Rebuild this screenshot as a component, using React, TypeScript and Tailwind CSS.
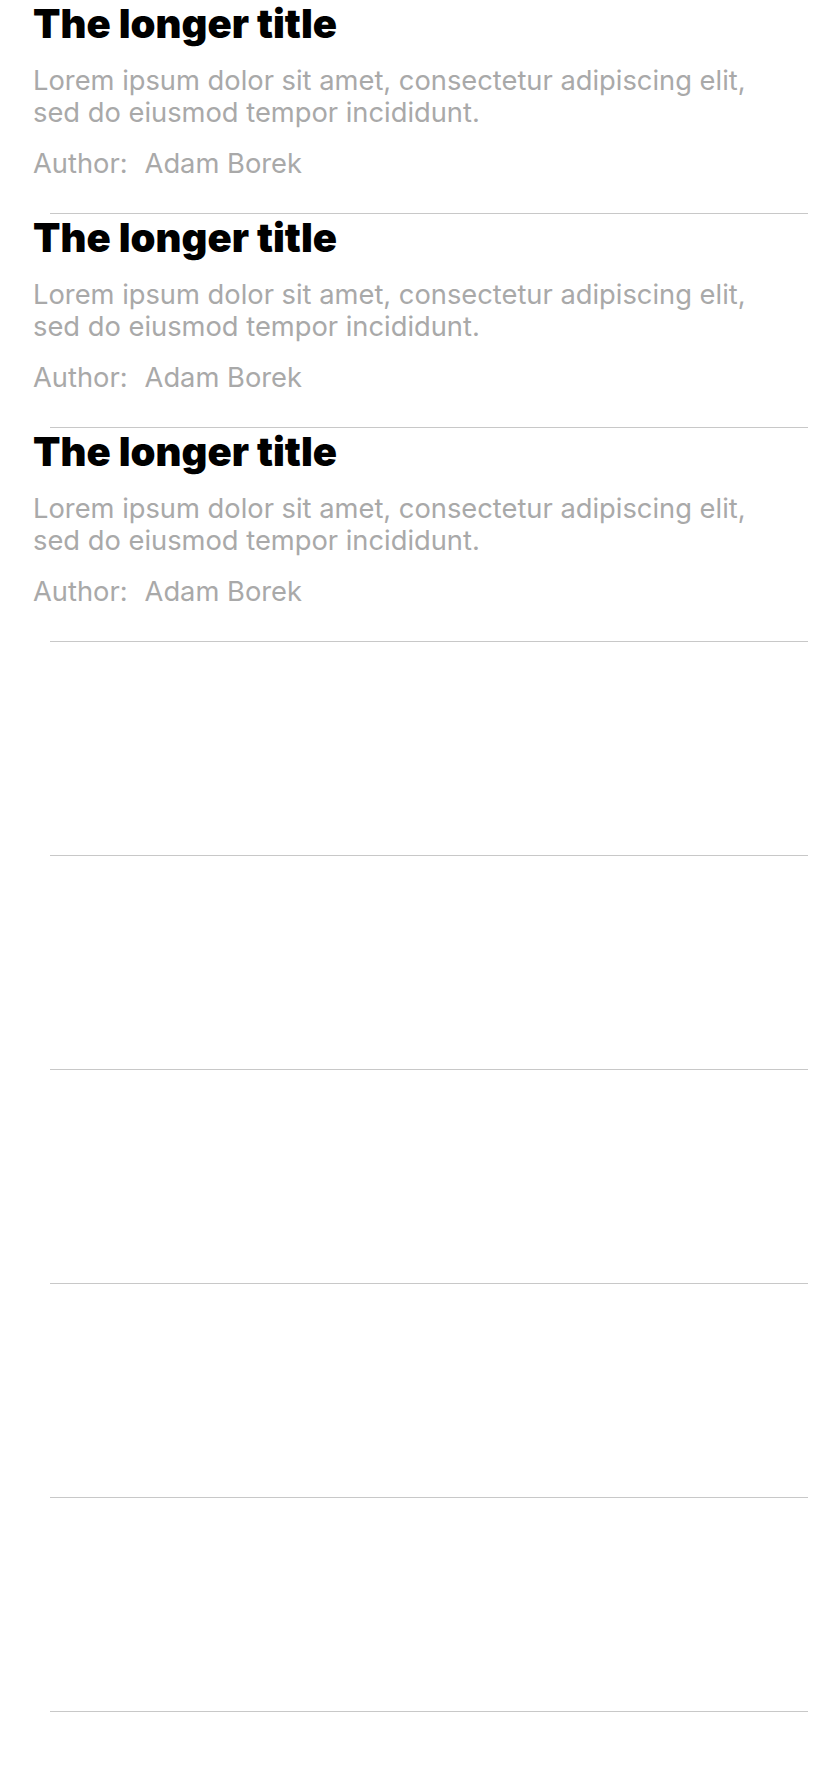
import React from "react";

const rows = [0, 1, 2, 3, 4, 5, 6, 7, 8];

function Cell({ filled }: { filled: boolean }) {
  return (
    <div className="relative h-[214px] flex flex-col">
      {filled ? (
        <div className="pl-[33px] pr-[20px] flex flex-col" style={{ fontFamily: "Inter, sans-serif" }}>
          <div className="text-[40px] leading-[48px] font-black text-black">
            The longer title
          </div>
          <div className="mt-[17px] text-[27.3px] leading-[32px] text-[#a9a9a9] whitespace-nowrap">
            Lorem ipsum dolor sit amet, consectetur adipiscing elit,
            <br />
            sed do eiusmod tempor incididunt.
          </div>
          <div className="mt-[19px] flex gap-[17px] text-[27.3px] leading-[32px] text-[#a9a9a9]">
            <span>Author:</span>
            <span>Adam Borek</span>
          </div>
        </div>
      ) : null}
      <div className="mt-auto ml-[50px] mr-[20px] h-px bg-[#c8c8c8]" />
    </div>
  );
}

export default function App() {
  return (
    <div className="w-[828px] h-[1792px] bg-white overflow-hidden">
      {rows.map((r) => (
        <Cell key={r} filled={r < 3} />
      ))}
    </div>
  );
}
